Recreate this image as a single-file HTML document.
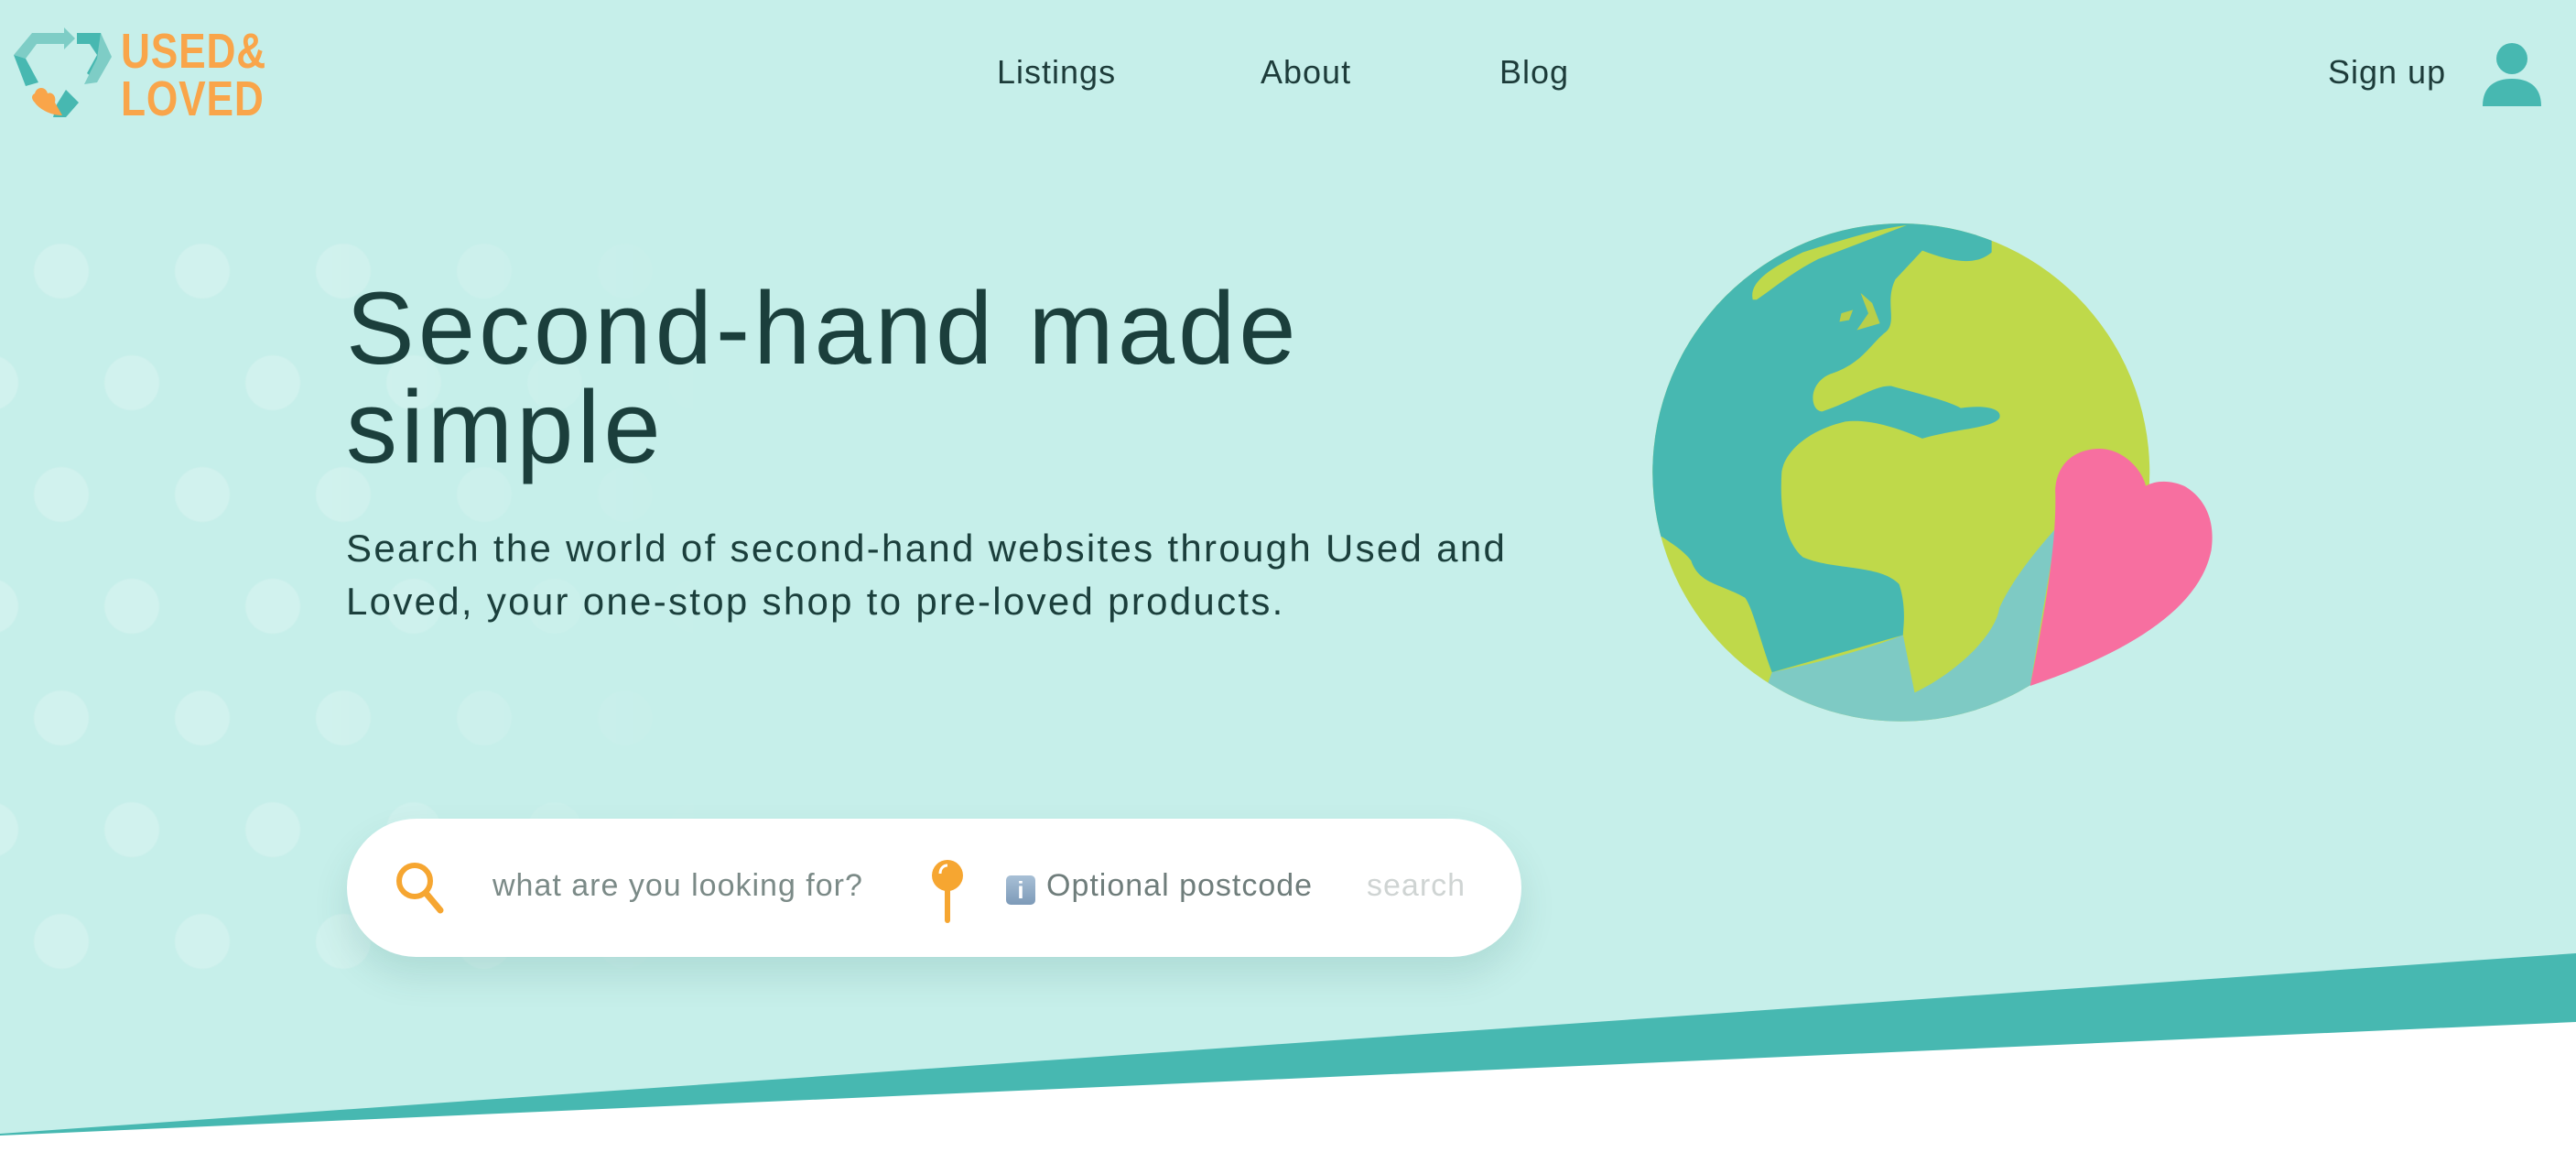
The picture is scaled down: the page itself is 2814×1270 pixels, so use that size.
<!DOCTYPE html>
<html><head><meta charset="utf-8"><style>
*{margin:0;padding:0;box-sizing:border-box}
body{width:2814px;height:1270px;overflow:hidden;background:#c6efea;font-family:"Liberation Sans",sans-serif;position:relative}
.dots{position:absolute;left:0;top:266px;width:800px;height:800px;
background-image:radial-gradient(circle,rgba(255,255,255,.2) 29px,transparent 31px),radial-gradient(circle,rgba(255,255,255,.2) 29px,transparent 31px);
background-size:154px 244px;background-position:-10px -92px,67px 30px;
-webkit-mask-image:linear-gradient(90deg,#000 40%,transparent);}
.nav{position:absolute;top:58px;font-size:36px;color:#1d3c3a;letter-spacing:1px}
h1{position:absolute;left:378px;top:305px;font-size:112px;line-height:108px;font-weight:normal;color:#1b3f3c;letter-spacing:4px}
p.sub{position:absolute;left:378px;top:570px;font-size:42px;line-height:58px;color:#1b3f3c;letter-spacing:2.3px;white-space:nowrap}
.search{position:absolute;left:379px;top:894px;width:1283px;height:151px;background:#fff;border-radius:76px;box-shadow:0 20px 40px rgba(0,80,70,.12)}
.search span{position:absolute;top:54px;font-size:34px;letter-spacing:1px}
</style></head><body>
<div class="dots"></div>
<svg style="position:absolute;left:10px;top:30px" width="115" height="105" viewBox="0 0 115 105">
<path d="M5 30 L25 6 L60 6 L60 -0 L72 12 L60 24 L60 18 L30 18 L18 34 Z" fill="#7ecdc6"/>
<path d="M5 30 L18 34 L32 60 L18 64 Z" fill="#47b8b1"/>
<path d="M74 6 L100 6 L110 30 L95 58 L85 50 L96 30 L88 18 L74 18 Z" fill="#47b8b1"/>
<path d="M100 6 L112 32 L96 60 L82 62 L96 34 Z" fill="#7ecdc6"/>
<path d="M62 68 L76 82 L62 98 L48 98 L52 84 Z" fill="#47b8b1"/>
<path d="M28 72 C30 64 40 64 42 72 C46 70 52 74 50 82 L58 96 C44 96 32 88 28 82 C24 78 24 74 28 72Z" fill="#f9a54a"/>
</svg>
<div style="position:absolute;left:132px;top:30px;font-size:54px;line-height:52px;font-weight:bold;color:#f9a54a;letter-spacing:1px;transform:scaleX(.82);transform-origin:left">USED&amp;<br>LOVED</div>
<div class="nav" style="left:1089px">Listings</div>
<div class="nav" style="left:1377px">About</div>
<div class="nav" style="left:1638px">Blog</div>
<div class="nav" style="left:2543px">Sign up</div>
<svg style="position:absolute;left:2710px;top:46px" width="68" height="70" viewBox="0 0 68 70"><circle cx="34" cy="18" r="17" fill="#47b8b1"/><path d="M2 70 C2 48 16 40 34 40 C52 40 66 48 66 70Z" fill="#47b8b1"/></svg>
<h1>Second-hand made<br>simple</h1>
<p class="sub">Search the world of second-hand websites through Used and<br>Loved, your one-stop shop to pre-loved products.</p>
<div class="search">
<svg style="position:absolute;left:52px;top:46px" width="56" height="58" viewBox="0 0 56 58"><circle cx="22" cy="22" r="17" fill="none" stroke="#f6a631" stroke-width="6"/><path d="M34 35 L50 54" stroke="#f6a631" stroke-width="7" stroke-linecap="round"/></svg>
<span style="left:159px;color:#7b8a87">what are you looking for?</span>
<svg style="position:absolute;left:636px;top:44px" width="40" height="72" viewBox="0 0 40 72"><circle cx="20" cy="18" r="17" fill="#f6a631"/><path d="M12 16 C12 10 16 7 20 7" stroke="#fff" stroke-width="3" fill="none"/><rect x="17" y="30" width="6" height="40" rx="3" fill="#f6a631"/></svg>
<div style="position:absolute;left:720px;top:62px;width:32px;height:32px;border-radius:5px;background:linear-gradient(#a8c0d6,#7d9ab8);color:#fff;font-size:26px;text-align:center;line-height:32px;font-weight:bold">i</div>
<span style="left:764px;color:#6f7d7b">Optional postcode</span>
<span style="left:1114px;color:#cfd4d3">search</span>
</div>
<svg style="position:absolute;left:1780px;top:220px" width="660" height="580" viewBox="0 0 1568 1568" preserveAspectRatio="none">
<defs><clipPath id="c"><ellipse cx="705" cy="800" rx="645" ry="735"/></clipPath></defs>
<ellipse cx="705" cy="800" rx="645" ry="735" fill="#bfd94a"/>
<g clip-path="url(#c)">
<path d="M940 150 C900 190 840 180 760 145 L690 230 C660 300 700 360 660 390 C620 430 600 480 520 510 C460 540 470 620 500 620 C580 590 640 540 680 545 C760 570 830 590 860 610 C920 600 970 610 960 640 C940 670 850 670 760 700 C700 670 620 640 560 650 C450 680 400 750 395 800 C390 900 400 1000 450 1050 C530 1090 650 1070 700 1130 C720 1200 710 1260 710 1280 L370 1390 C340 1300 320 1200 300 1170 C240 1130 180 1130 160 1060 C140 1030 110 1010 85 990 L0 990 L0 0 L940 0 Z" fill="#47b8b1"/>
<path d="M320 290 C310 240 360 200 450 150 C560 110 650 80 720 70 L490 170 C420 210 370 260 330 290 Z" fill="#bfd94a"/>
<path d="M370 1390 C500 1360 620 1320 710 1280 L740 1450 C850 1390 950 1280 960 1200 C1000 1100 1080 1000 1110 960 L1040 1430 L1100 1600 L300 1600 Z" fill="#7ecac4"/>
<path d="M600 270 L620 330 L590 380 L650 360 L630 300Z M550 330 L580 320 L570 350 L545 355Z" fill="#b8cf4a"/>
</g>
<path d="M1040 1430 C1080 1200 1110 1000 1105 850 C1110 760 1170 730 1220 730 C1280 730 1330 790 1340 840 C1370 820 1410 825 1440 840 C1500 880 1520 950 1510 1030 C1480 1200 1300 1330 1040 1430 Z" fill="#f76fa0"/>
</svg>
<svg style="position:absolute;left:0;top:0" width="2814" height="1270"><polygon points="0,1238 2814,1041 2814,1270 0,1270" fill="#47b8b1"/><polygon points="0,1240 2814,1116 2814,1270 0,1270" fill="#fff"/></svg>
</body></html>
